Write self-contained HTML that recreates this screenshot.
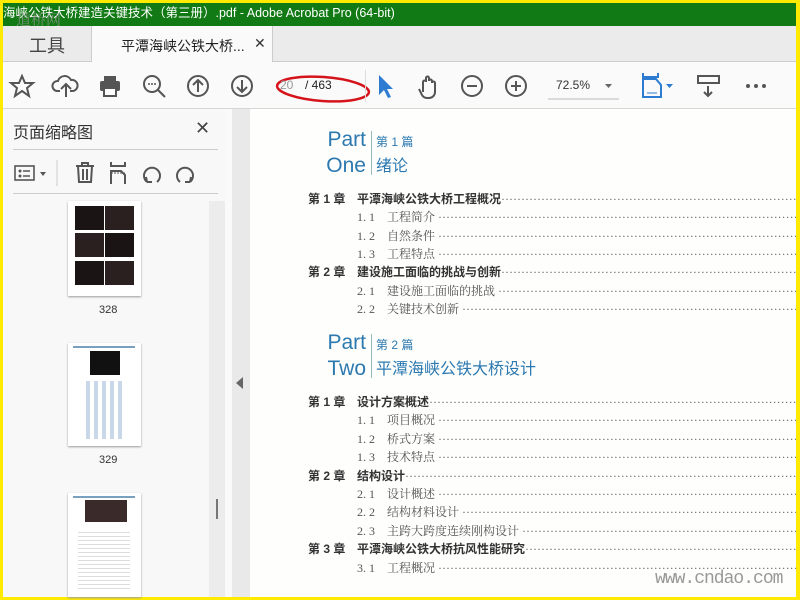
<!DOCTYPE html>
<html><head><meta charset="utf-8"><style>
*{margin:0;padding:0;box-sizing:border-box}
body{width:800px;height:600px;overflow:hidden;background:#ffea00;position:relative;font-family:"Liberation Sans","Noto Sans CJK SC",sans-serif}
.a{position:absolute}
.title{left:3px;top:3px;width:793px;height:23px;background:#127a14;color:#fff;font-size:12.5px;line-height:20px;white-space:nowrap;overflow:hidden}
.tabs{left:3px;top:26px;width:793px;height:36px;background:#ebebeb;border-bottom:1px solid #ccc}
.tb{left:3px;top:62px;width:793px;height:47px;background:#fafafa;border-bottom:1px solid #d6d6d6}
.side{left:3px;top:109px;width:229px;height:488px;background:#f8f8f8}
.div{left:232px;top:109px;width:18px;height:488px;background:#e9e9e9}
.page{left:250px;top:109px;width:546px;height:488px;background:#fefefd}
.row{position:absolute;left:308px;right:4px;display:flex;font-family:"Liberation Serif","Noto Serif CJK SC",serif;font-size:12px;color:#555;white-space:nowrap;line-height:15px}
.row b{font-family:"Liberation Sans","Noto Sans CJK SC",sans-serif;color:#333;font-weight:bold}
.row .d{flex:1;overflow:hidden;color:#666;letter-spacing:0px}
.row .d::after{content:"·························································································································································"}
.sub{left:357px}
.n{width:30px;display:inline-block}
.ch{width:49px;display:inline-block}
.pt{color:#2c79b0;font-size:21px;line-height:26px;text-align:right;font-family:"Liberation Sans",sans-serif}
.ic{stroke:#555;fill:none;stroke-width:2}
</style></head><body>
<div class="a title">海峡公铁大桥建造关键技术（第三册）.pdf - Adobe Acrobat Pro (64-bit)</div>
<div class="a" style="left:16px;top:9px;color:rgba(150,150,150,.75);font-size:15px;font-family:'Liberation Serif','Noto Serif CJK SC',serif">道桥网</div>
<div class="a tabs">
 <div class="a" style="left:26px;top:6px;font-size:18px;color:#444">工具</div>
 <div class="a" style="left:88px;top:0;width:182px;height:36px;background:#fafafa;border-right:1px solid #ccc;border-left:1px solid #ccc">
  <span class="a" style="left:29px;top:10px;font-size:14px;color:#222">平潭海峡公铁大桥...</span>
  <span class="a" style="left:162px;top:9px;font-size:14px;color:#333">✕</span>
 </div>
</div>
<div class="a tb">
<svg class="a" style="left:0;top:0" width="793" height="47">
 <path class="ic" d="M19 14 L22 21 L30 21 L24 26 L26 34 L19 29 L12 34 L14 26 L8 21 L16 21 Z" stroke-width="1.6"/>
 <path class="ic" d="M57 29 h-3 a5 5 0 0 1 1-10 a7 7 0 0 1 13-1 a5 5 0 0 1 2 11 h-3 M63 35 v-12 M58 27 l5-5 5 5"/>
 <rect x="97" y="19" width="20" height="10" rx="2" fill="#555"/><rect x="101" y="14" width="12" height="5" fill="#555"/><rect x="101" y="26" width="12" height="8" fill="#fff" stroke="#555" stroke-width="2"/>
 <circle class="ic" cx="149" cy="22" r="8"/><path class="ic" d="M155 28 l7 7" stroke-width="2.5"/><circle cx="146" cy="22" r="1" fill="#555"/><circle cx="149" cy="22" r="1" fill="#555"/><circle cx="152" cy="22" r="1" fill="#555"/>
 <circle class="ic" cx="195" cy="24" r="10"/><path class="ic" d="M195 30 v-12 M190 23 l5-5 5 5"/>
 <circle class="ic" cx="239" cy="24" r="10"/><path class="ic" d="M239 18 v12 M234 25 l5 5 5-5"/>
 <ellipse cx="320" cy="27" rx="46" ry="12" fill="none" stroke="#d4141a" stroke-width="2.5" transform="rotate(4 320 27)"/>
 <path d="M376 13 v20 l5-5 4 8 3-1-4-8 6 0z" fill="#2d7cd1"/>
 <path class="ic" stroke-width="1.6" d="M420 30 v-10 a1.5 1.5 0 0 1 3 0 v-4 a1.5 1.5 0 0 1 3 0 v3 a1.5 1.5 0 0 1 3 0 v2 a1.5 1.5 0 0 1 3 0 v9 a6 6 0 0 1-6 6 h-2 a6 6 0 0 1-5-3 l-3-6"/>
 <circle class="ic" cx="469" cy="24" r="10"/><path class="ic" d="M464 24 h10"/>
 <circle class="ic" cx="513" cy="24" r="10"/><path class="ic" d="M508 24 h10 M513 19 v10"/>
 <line x1="545" y1="37" x2="616" y2="37" stroke="#bbb"/>
 <path d="M602 22 h7 l-3.5 4z" fill="#666"/>
 <path d="M640 11 v4 h15 v-4 M640 17 v18 h18 v-12 l-5-6z" fill="none" stroke="#2d7cd1" stroke-width="2"/><path d="M644 31 h10" stroke="#2d7cd1"/>
 <path d="M663 22 h7 l-3.5 4z" fill="#2d7cd1"/>
 <rect x="695" y="14" width="21" height="7" fill="none" stroke="#555" stroke-width="2"/><path class="ic" d="M705 24 v10 M701 30 l4 4 4-4"/>
 <circle cx="745" cy="24" r="2" fill="#555"/><circle cx="753" cy="24" r="2" fill="#555"/><circle cx="761" cy="24" r="2" fill="#555"/>
</svg>
 <span class="a" style="left:277px;top:16px;font-size:12px;color:#999">20</span>
 <span class="a" style="left:302px;top:16px;font-size:12px;color:#222">/ 463</span>
 <span class="a" style="left:553px;top:16px;font-size:12px;color:#333">72.5%</span>
 <div class="a" style="left:362px;top:8px;width:1px;height:32px;background:#ddd"></div>
</div>
<div class="a side">
 <div class="a" style="left:10px;top:10px;font-size:16px;color:#333">页面缩略图</div>
 <div class="a" style="left:192px;top:9px;font-size:18px;color:#444">✕</div>
 <div class="a" style="left:10px;top:40px;width:205px;height:1px;background:#ccc"></div>
 <div class="a" style="left:10px;top:84px;width:205px;height:1px;background:#ccc"></div>
 <svg class="a" style="left:0;top:44px" width="229" height="40">
  <rect x="12" y="13" width="19" height="14" fill="none" stroke="#555" stroke-width="1.6"/><circle cx="17" cy="18" r="1.5" fill="#555"/><circle cx="17" cy="23" r="1.5" fill="#555"/><path d="M20 18 h7 M20 23 h7" stroke="#555" stroke-width="1.5"/>
  <path d="M37 19 h6 l-3 4z" fill="#555"/><line x1="54" y1="7" x2="54" y2="33" stroke="#ccc"/>
  <path class="ic" stroke-width="1.6" d="M73 13 h18 M79 13 v-3 h6 v3 M75 13 l1 16 h12 l1-16 M80 16 v11 M84 16 v11"/>
  <path class="ic" stroke-width="1.6" d="M108 9 v4 h14 v-4 M108 31 v-13 h10 l4 4 v9"/><path d="M108 20 h14" stroke="#555" stroke-dasharray="2 1"/>
  <path class="ic" stroke-width="2" d="M144 29 a8 8 0 1 1 10 0 M144 29 l-1-5 M144 29 l5 0"/>
  <path class="ic" stroke-width="2" d="M187 29 a8 8 0 1 0 -10 0 M187 29 l1-5 M187 29 l-5 0"/>
 </svg>
 <div class="a" style="left:206px;top:92px;width:16px;height:396px;background:#ececec"></div>
 <div class="a" style="left:213px;top:390px;width:2px;height:20px;background:#777"></div>
 <div class="a" style="left:65px;top:92px;width:73px;height:95px;background:#fff;box-shadow:0 1px 2px #999">
  <div class="a" style="left:7px;top:5px;width:29px;height:24px;background:#1a1414"></div>
  <div class="a" style="left:37px;top:5px;width:29px;height:24px;background:#2a2020"></div>
  <div class="a" style="left:7px;top:32px;width:29px;height:24px;background:#2a2020"></div>
  <div class="a" style="left:37px;top:32px;width:29px;height:24px;background:#1a1414"></div>
  <div class="a" style="left:7px;top:60px;width:29px;height:24px;background:#1a1414"></div>
  <div class="a" style="left:37px;top:60px;width:29px;height:24px;background:#2a2020"></div>
 </div>
 <div class="a" style="left:96px;top:195px;font-size:11px;color:#333">328</div>
 <div class="a" style="left:65px;top:234px;width:73px;height:103px;background:#fff;box-shadow:0 1px 2px #999">
  <div class="a" style="left:5px;top:3px;width:62px;height:2px;background:#7aa0c0"></div>
  <div class="a" style="left:22px;top:8px;width:30px;height:24px;background:#111"></div>
  <div class="a" style="left:18px;top:38px;width:38px;height:58px;background:repeating-linear-gradient(90deg,#c8d8e8 0 4px,#fff 4px 8px)"></div>
 </div>
 <div class="a" style="left:96px;top:345px;font-size:11px;color:#333">329</div>
 <div class="a" style="left:65px;top:384px;width:73px;height:104px;background:#fff;box-shadow:0 1px 2px #999">
  <div class="a" style="left:5px;top:3px;width:62px;height:2px;background:#7aa0c0"></div>
  <div class="a" style="left:17px;top:7px;width:42px;height:22px;background:#3a2a2a"></div>
  <div class="a" style="left:10px;top:36px;width:52px;height:60px;background:repeating-linear-gradient(0deg,#ddd 0 1px,#fff 1px 4px)"></div>
 </div>
</div>
<div class="a div"><div class="a" style="left:4px;top:268px;width:0;height:0;border-top:6px solid transparent;border-bottom:6px solid transparent;border-right:7px solid #666"></div></div>
<div class="a" style="left:225px;top:109px;width:7px;height:488px;background:#fafafa"></div>
<div class="a page"></div>
<div class="a pt" style="left:308px;top:127px;width:58px">Part<br>One</div>
<div class="a" style="left:371px;top:131px;width:1px;height:44px;background:#9bb"></div>
<div class="a" style="left:376px;top:133px;font-size:12px;color:#2c79b0">第 1 篇</div>
<div class="a" style="left:376px;top:152px;font-size:16px;color:#2c79b0">绪论</div>
<div class="a pt" style="left:308px;top:330px;width:58px">Part<br>Two</div>
<div class="a" style="left:371px;top:334px;width:1px;height:44px;background:#9bb"></div>
<div class="a" style="left:376px;top:336px;font-size:12px;color:#2c79b0">第 2 篇</div>
<div class="a" style="left:376px;top:355px;font-size:16px;color:#2c79b0">平潭海峡公铁大桥设计</div>

<div class="row" style="top:192px"><b class="ch">第 1 章</b><b>平潭海峡公铁大桥工程概况</b><span class="d"></span></div>
<div class="row sub" style="top:210px"><span class="n">1. 1</span>工程简介&nbsp;<span class="d"></span></div>
<div class="row sub" style="top:229px"><span class="n">1. 2</span>自然条件&nbsp;<span class="d"></span></div>
<div class="row sub" style="top:247px"><span class="n">1. 3</span>工程特点&nbsp;<span class="d"></span></div>
<div class="row" style="top:265px"><b class="ch">第 2 章</b><b>建设施工面临的挑战与创新</b><span class="d"></span></div>
<div class="row sub" style="top:284px"><span class="n">2. 1</span>建设施工面临的挑战&nbsp;<span class="d"></span></div>
<div class="row sub" style="top:302px"><span class="n">2. 2</span>关键技术创新&nbsp;<span class="d"></span></div>

<div class="row" style="top:395px"><b class="ch">第 1 章</b><b>设计方案概述</b><span class="d"></span></div>
<div class="row sub" style="top:413px"><span class="n">1. 1</span>项目概况&nbsp;<span class="d"></span></div>
<div class="row sub" style="top:432px"><span class="n">1. 2</span>桥式方案&nbsp;<span class="d"></span></div>
<div class="row sub" style="top:450px"><span class="n">1. 3</span>技术特点&nbsp;<span class="d"></span></div>
<div class="row" style="top:469px"><b class="ch">第 2 章</b><b>结构设计</b><span class="d"></span></div>
<div class="row sub" style="top:487px"><span class="n">2. 1</span>设计概述&nbsp;<span class="d"></span></div>
<div class="row sub" style="top:505px"><span class="n">2. 2</span>结构材料设计&nbsp;<span class="d"></span></div>
<div class="row sub" style="top:524px"><span class="n">2. 3</span>主跨大跨度连续刚构设计&nbsp;<span class="d"></span></div>
<div class="row" style="top:542px"><b class="ch">第 3 章</b><b>平潭海峡公铁大桥抗风性能研究</b><span class="d"></span></div>
<div class="row sub" style="top:561px"><span class="n">3. 1</span>工程概况&nbsp;<span class="d"></span></div>
<div class="a" style="left:655px;top:569px;font-size:18px;color:#999;font-family:'Liberation Mono',monospace;background:#fefefd;letter-spacing:-1px">www.cndao.com</div>
</body></html>
